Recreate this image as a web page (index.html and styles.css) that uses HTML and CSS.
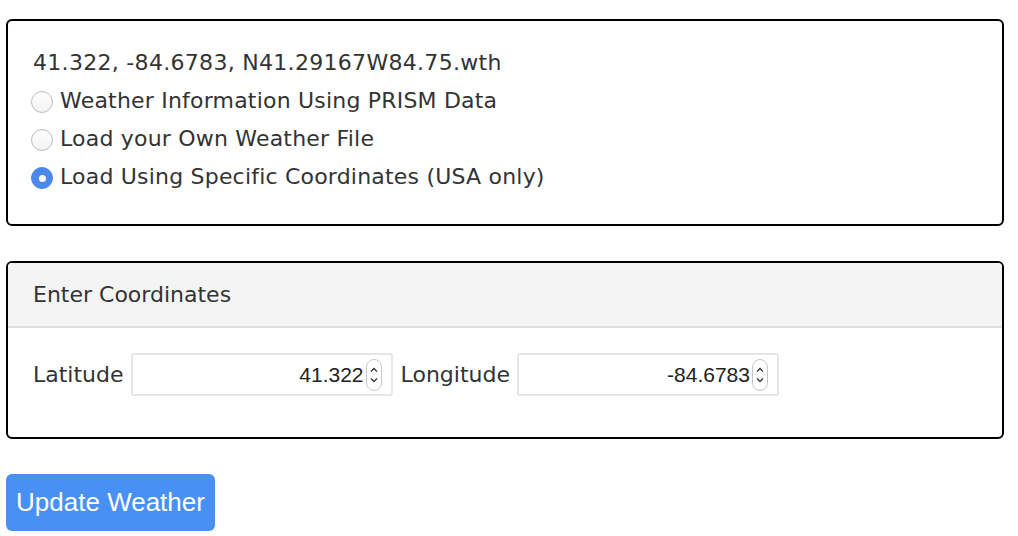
FILE: index.html
```html
<!DOCTYPE html>
<html>
<head>
<meta charset="utf-8">
<link rel="stylesheet" href="styles.css">
</head>
<body>
<div class="page">
  <div class="box options">
    <div class="line first">41.322, -84.6783, N41.29167W84.75.wth</div>
    <label class="line radio-row"><span class="radio"></span>Weather Information Using PRISM Data</label>
    <label class="line radio-row"><span class="radio"></span>Load your Own Weather File</label>
    <label class="line radio-row"><span class="radio checked"></span>Load Using Specific Coordinates (USA only)</label>
  </div>

  <div class="box coords">
    <div class="coords-head">Enter Coordinates</div>
    <div class="coords-body">
      <span class="field-label">Latitude</span>
      <div class="num-input">
        <span class="num-value">41.322</span>
        <svg class="spin" width="16" height="32" viewBox="0 0 16 32"><rect x="0.5" y="0.5" width="15" height="31" rx="7.5" fill="#fff" stroke="#c8c8c8"/><path d="M5 12.5 L8 9.5 L11 12.5" fill="none" stroke="#333" stroke-width="1.3"/><path d="M5 19.5 L8 22.5 L11 19.5" fill="none" stroke="#333" stroke-width="1.3"/></svg>
      </div>
      <span class="field-label">Longitude</span>
      <div class="num-input">
        <span class="num-value">-84.6783</span>
        <svg class="spin" width="16" height="32" viewBox="0 0 16 32"><rect x="0.5" y="0.5" width="15" height="31" rx="7.5" fill="#fff" stroke="#c8c8c8"/><path d="M5 12.5 L8 9.5 L11 12.5" fill="none" stroke="#333" stroke-width="1.3"/><path d="M5 19.5 L8 22.5 L11 19.5" fill="none" stroke="#333" stroke-width="1.3"/></svg>
      </div>
    </div>
  </div>

  <button class="update-btn">Update Weather</button>
</div>
</body>
</html>
```
FILE: styles.css
```css
html, body {
  margin: 0;
  padding: 0;
  background: #fff;
}
.page {
  padding: 19px 14px 0 6px;
  font-family: "DejaVu Sans", Verdana, sans-serif;
  font-size: 22px;
  color: #333;
  display: flex;
  flex-direction: column;
  align-items: flex-start;
}
.box {
  align-self: stretch;
  border: 2px solid #000;
  border-radius: 6px;
  box-sizing: border-box;
}
.options {
  padding: 23px 20px 28px 25px;
  display: flex;
  flex-direction: column;
  letter-spacing: 0.2px;
}
.line {
  height: 38px;
  line-height: 38px;
  display: flex;
  align-items: center;
}
.first {
  letter-spacing: 0.3px;
}
.radio-row {
  margin-left: -2px;
}
.radio {
  width: 20px;
  height: 20px;
  border-radius: 50%;
  border: 1px solid #bdbdbd;
  background: linear-gradient(#fff, #f2f2f2);
  margin-right: 7px;
  flex: none;
  box-sizing: content-box;
  position: relative;
  top: 1px;
}
.radio.checked {
  border-color: #4a88ec;
  background: #4a88ec;
  display: flex;
  align-items: center;
  justify-content: center;
}
.radio.checked::after {
  content: "";
  width: 7px;
  height: 7px;
  border-radius: 50%;
  background: #fff;
}
.coords {
  margin-top: 35px;
  overflow: hidden;
}
.coords-head {
  height: 63px;
  line-height: 64px;
  background: #f4f4f4;
  border-bottom: 2px solid #dedede;
  padding-left: 25px;
}
.coords-body {
  padding: 25px 20px 41px 25px;
  display: flex;
  align-items: center;
}
.field-label {
  margin-right: 7px;
}
.num-input {
  width: 262px;
  height: 43px;
  box-sizing: border-box;
  border: 2px solid #e6e6e6;
  border-radius: 3px;
  display: flex;
  align-items: center;
  justify-content: flex-end;
  padding-right: 9px;
  margin-right: 8px;
  font-family: "Liberation Sans", Arial, sans-serif;
  font-size: 21px;
  color: #222;
}
.num-value {
  margin-right: 2px;
}
.spin {
  display: block;
}
.update-btn {
  margin-top: 35px;
  width: 209px;
  height: 57px;
  border: none;
  border-radius: 6px;
  background: #4990f3;
  color: #fff;
  font-family: "Liberation Sans", Arial, sans-serif;
  font-size: 26px;
  padding: 0;
}
```
